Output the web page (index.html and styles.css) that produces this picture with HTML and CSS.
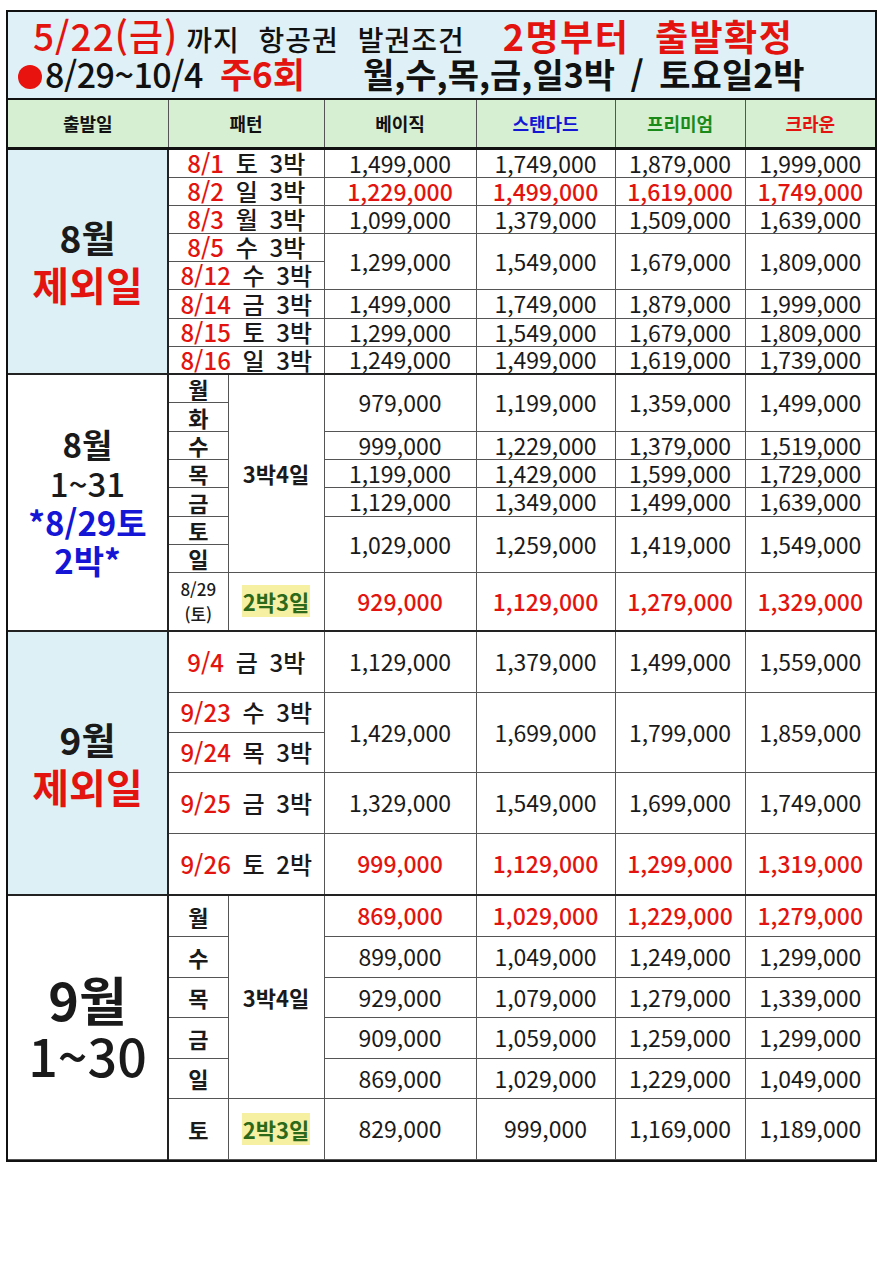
FILE: index.html
```html
<!DOCTYPE html>
<html lang="ko">
<head>
<meta charset="utf-8">
<title>요금표</title>
<link rel="stylesheet" href="styles.css">
</head>
<body>
<div class="sheet">
  <div class="title">
    <div class="tl1">
      <span class="red t-date">5/22(금)</span>
      <span class="t-cond">까지 항공권 발권조건</span>
      <span class="red t-big">2명부터 출발확정</span>
    </div>
    <div class="tl2">
      <span class="dot"></span>
      <span class="t-range">8/29~10/4</span>
      <span class="red t-week">주6회</span>
      <span class="t-days">월,수,목,금,일3박 / 토요일2박</span>
    </div>
  </div>
  <table class="grid">
    <colgroup>
      <col class="c1"><col class="c2a"><col class="c2b"><col class="c3"><col class="c4"><col class="c5"><col class="c6">
    </colgroup>
    <tr class="head">
      <th>출발일</th><th colspan="2">패턴</th><th>베이직</th><th class="blue">스탠다드</th><th class="green">프리미엄</th><th class="red">크라운</th>
    </tr>

    <!-- Section 1 -->
    <tr class="h29 sec">
      <td rowspan="8" class="left lb"><div class="m36">8월</div><div class="ex red">제외일</div></td>
      <td colspan="2" class="pat"><span class="red">8/1</span> 토 3박</td>
      <td>1,499,000</td><td>1,749,000</td><td>1,879,000</td><td>1,999,000</td>
    </tr>
    <tr class="h28 hot">
      <td colspan="2" class="pat"><span class="red">8/2</span> 일 3박</td>
      <td>1,229,000</td><td>1,499,000</td><td>1,619,000</td><td>1,749,000</td>
    </tr>
    <tr class="h28">
      <td colspan="2" class="pat"><span class="red">8/3</span> 월 3박</td>
      <td>1,099,000</td><td>1,379,000</td><td>1,509,000</td><td>1,639,000</td>
    </tr>
    <tr class="h28">
      <td colspan="2" class="pat"><span class="red">8/5</span> 수 3박</td>
      <td rowspan="2">1,299,000</td><td rowspan="2">1,549,000</td><td rowspan="2">1,679,000</td><td rowspan="2">1,809,000</td>
    </tr>
    <tr class="h28">
      <td colspan="2" class="pat"><span class="red">8/12</span> 수 3박</td>
    </tr>
    <tr class="h29">
      <td colspan="2" class="pat"><span class="red">8/14</span> 금 3박</td>
      <td>1,499,000</td><td>1,749,000</td><td>1,879,000</td><td>1,999,000</td>
    </tr>
    <tr class="h28">
      <td colspan="2" class="pat"><span class="red">8/15</span> 토 3박</td>
      <td>1,299,000</td><td>1,549,000</td><td>1,679,000</td><td>1,809,000</td>
    </tr>
    <tr class="h28">
      <td colspan="2" class="pat"><span class="red">8/16</span> 일 3박</td>
      <td>1,249,000</td><td>1,499,000</td><td>1,619,000</td><td>1,739,000</td>
    </tr>

    <!-- Section 2 -->
    <tr class="h28 sec">
      <td rowspan="8" class="left"><div class="m32 b">8월</div><div class="m32">1~31</div><div class="m32 blue">*8/29토</div><div class="m32 blue">2박*</div></td>
      <td class="day">월</td>
      <td rowspan="7" class="plan">3박4일</td>
      <td rowspan="2">979,000</td><td rowspan="2">1,199,000</td><td rowspan="2">1,359,000</td><td rowspan="2">1,499,000</td>
    </tr>
    <tr class="h29"><td class="day">화</td></tr>
    <tr class="h28">
      <td class="day">수</td>
      <td>999,000</td><td>1,229,000</td><td>1,379,000</td><td>1,519,000</td>
    </tr>
    <tr class="h28">
      <td class="day">목</td>
      <td>1,199,000</td><td>1,429,000</td><td>1,599,000</td><td>1,729,000</td>
    </tr>
    <tr class="h29">
      <td class="day">금</td>
      <td>1,129,000</td><td>1,349,000</td><td>1,499,000</td><td>1,639,000</td>
    </tr>
    <tr class="h28">
      <td class="day">토</td>
      <td rowspan="2">1,029,000</td><td rowspan="2">1,259,000</td><td rowspan="2">1,419,000</td><td rowspan="2">1,549,000</td>
    </tr>
    <tr class="h28"><td class="day">일</td></tr>
    <tr class="h59 hot">
      <td class="small">8/29<br>(토)</td>
      <td class="plan"><span class="hl">2박3일</span></td>
      <td>929,000</td><td>1,129,000</td><td>1,279,000</td><td>1,329,000</td>
    </tr>

    <!-- Section 3 -->
    <tr class="h61 sec">
      <td rowspan="5" class="left lb"><div class="m36">9월</div><div class="ex red">제외일</div></td>
      <td colspan="2" class="pat"><span class="red">9/4</span> 금 3박</td>
      <td>1,129,000</td><td>1,379,000</td><td>1,499,000</td><td>1,559,000</td>
    </tr>
    <tr class="h40">
      <td colspan="2" class="pat"><span class="red">9/23</span> 수 3박</td>
      <td rowspan="2">1,429,000</td><td rowspan="2">1,699,000</td><td rowspan="2">1,799,000</td><td rowspan="2">1,859,000</td>
    </tr>
    <tr class="h40">
      <td colspan="2" class="pat"><span class="red">9/24</span> 목 3박</td>
    </tr>
    <tr class="h61">
      <td colspan="2" class="pat"><span class="red">9/25</span> 금 3박</td>
      <td>1,329,000</td><td>1,549,000</td><td>1,699,000</td><td>1,749,000</td>
    </tr>
    <tr class="h62 hot">
      <td colspan="2" class="pat"><span class="red">9/26</span> 토 2박</td>
      <td>999,000</td><td>1,129,000</td><td>1,299,000</td><td>1,319,000</td>
    </tr>

    <!-- Section 4 -->
    <tr class="h41 sec hot">
      <td rowspan="6" class="left"><div class="m52">9월</div><div class="m52 n">1~30</div></td>
      <td class="day">월</td>
      <td rowspan="5" class="plan">3박4일</td>
      <td>869,000</td><td>1,029,000</td><td>1,229,000</td><td>1,279,000</td>
    </tr>
    <tr class="h41">
      <td class="day">수</td>
      <td>899,000</td><td>1,049,000</td><td>1,249,000</td><td>1,299,000</td>
    </tr>
    <tr class="h40">
      <td class="day">목</td>
      <td>929,000</td><td>1,079,000</td><td>1,279,000</td><td>1,339,000</td>
    </tr>
    <tr class="h41">
      <td class="day">금</td>
      <td>909,000</td><td>1,059,000</td><td>1,259,000</td><td>1,299,000</td>
    </tr>
    <tr class="h40">
      <td class="day">일</td>
      <td>869,000</td><td>1,029,000</td><td>1,229,000</td><td>1,049,000</td>
    </tr>
    <tr class="h61">
      <td class="day">토</td>
      <td class="plan"><span class="hl">2박3일</span></td>
      <td>829,000</td><td>999,000</td><td>1,169,000</td><td>1,189,000</td>
    </tr>
  </table>
</div>
</body>
</html>
```

FILE: styles.css
```css
* { box-sizing: border-box; }

body {
  margin: 0;
  background: #ffffff;
  font-family: "Noto Sans CJK KR", "Noto Sans", sans-serif;
  color: #111111;
}

.sheet {
  margin: 10px 0 0 6px;
  width: 871px;
  border: 2px solid #111111;
}

.red { color: #e3140f; }
.blue { color: #1515d6; }
.green { color: #1a8a1a; }

/* ---------- title ---------- */
.title {
  height: 88px;
  background: #dff1f6;
  border-bottom: 2px solid #111111;
  padding: 5px 0 0 0;
}

.tl1, .tl2 {
  display: flex;
  align-items: baseline;
  line-height: 1;
  white-space: nowrap;
}

.tl1 { height: 38px; padding-left: 25px; }
.tl2 { height: 40px; padding-left: 10px; }

.t-date { font-size: 37px; font-weight: 500; letter-spacing: 1px; }
.t-cond { font-size: 28px; font-weight: 500; margin-left: 8px; letter-spacing: 1px; word-spacing: 10px; }
.t-big { font-size: 36px; font-weight: 700; margin-left: 38px; letter-spacing: 1.5px; word-spacing: 14px; }

.dot {
  width: 24px;
  height: 24px;
  border-radius: 50%;
  background: #e8120f;
  align-self: center;
  margin-top: 4px;
}
.t-range { font-size: 34px; font-weight: 500; margin-left: 3px; letter-spacing: -0.5px; }
.t-week { font-size: 35px; font-weight: 700; margin-left: 17px; }
.t-days { font-size: 34px; font-weight: 700; margin-left: 58px; word-spacing: 6px; }

/* ---------- grid ---------- */
.grid {
  width: 100%;
  border-collapse: collapse;
  table-layout: fixed;
}

.c1 { width: 160px; }
.c2a { width: 60px; }
.c2b { width: 96px; }
.c3 { width: 152px; }
.c4 { width: 139px; }
.c5 { width: 130px; }
.c6 { width: 130px; }

.grid th, .grid td {
  padding: 0;
  text-align: center;
  vertical-align: middle;
  line-height: 1;
  border: 1px solid #555555;
}

.grid tr > *:first-child { border-left: none; }
.grid tr > *:last-child { border-right: none; }

.head th {
  height: 48px;
  background: #d6eed2;
  font-size: 18px;
  font-weight: 700;
  border-bottom: 3px solid #111111;
  border-top: none;
}

.grid td {
  font-size: 23px;
  font-weight: 400;
  color: #1a1a1a;
}

.sec > td { border-top: 2px solid #222222; }

.h28 { height: 28px; }
.h29 { height: 29px; }
.h40 { height: 40px; }
.h41 { height: 41px; }
.h59 { height: 59px; }
.h61 { height: 61px; }
.h62 { height: 62px; }

.hot > td { color: #e3140f; font-weight: 500; }
.hot > td.pat, .hot > td.small, .hot > td.plan, .hot > td.day, .hot > td.left { color: #1a1a1a; }

.grid td.left { border-right: 2px solid #222222; }
.grid td.lb { background: #dcf0f6; }

.grid td.pat { font-size: 24px; font-weight: 500; word-spacing: 5px; }
.grid td.pat .red { color: #e3140f; }

.grid td.day { font-size: 22px; font-weight: 700; }
.grid td.plan { font-size: 22px; font-weight: 700; }
.grid td.small { font-size: 17px; font-weight: 500; line-height: 1.5; }

.hl {
  background: #f6f0a2;
  color: #2c6a1a;
  font-weight: 700;
  padding: 0 1px;
}

.m36 { font-size: 37px; font-weight: 700; line-height: 1.25; }
.ex { font-size: 40px; font-weight: 700; line-height: 1.2; }
.m32 { font-size: 33px; font-weight: 500; line-height: 1.18; }
.m32.b { font-weight: 700; }
.m32.blue { font-weight: 700; color: #1515d6; }
.m52 { font-size: 52px; font-weight: 700; line-height: 1.08; }
.m52.n { font-weight: 500; }
```
